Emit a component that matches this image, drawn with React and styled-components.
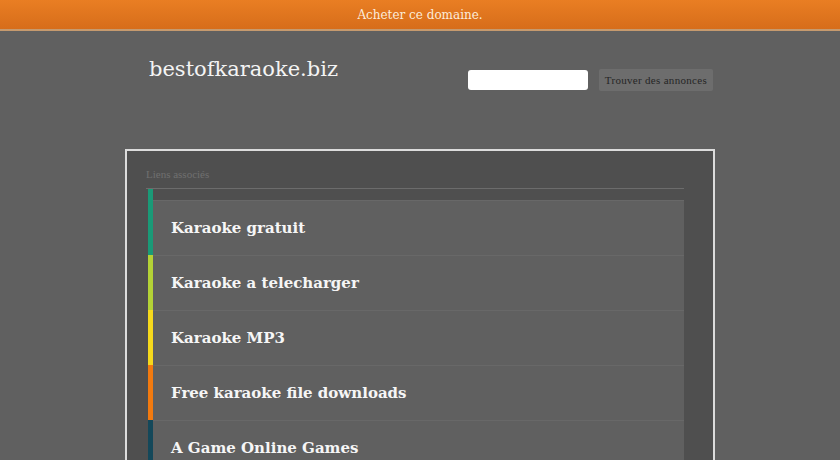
import React from 'react'
import styled, { createGlobalStyle } from 'styled-components'

const Global = createGlobalStyle`
  html, body {
    margin: 0;
    padding: 0;
    background: #606060;
    font-family: "Liberation Serif", "Times New Roman", serif;
    overflow: hidden;
  }
`

const TopBar = styled.div`
  height: 29px;
  background: linear-gradient(#e97e23, #d76d1a);
  border-bottom: 2px solid #c69a6e;
  display: flex;
  align-items: center;
  justify-content: center;
  color: #fcecdb;
  font-family: "DejaVu Serif", serif;
  font-size: 12px;
`

const Wrap = styled.div`
  width: 590px;
  margin: 0 auto;
`

const Header = styled.header`
  display: flex;
  justify-content: space-between;
  align-items: flex-start;
  height: 118px;
  padding: 0 2px 0 24px;
`

const Title = styled.h1`
  margin: 26px 0 0;
  font-family: "DejaVu Serif", serif;
  font-size: 21px;
  font-weight: normal;
  color: #f4f4f4;
`

const Search = styled.form`
  display: flex;
  align-items: center;
  gap: 11px;
  margin-top: 38px;
`

const Input = styled.input`
  width: 120px;
  height: 20px;
  box-sizing: border-box;
  border: none;
  border-radius: 3px;
  background: #fff;
`

const Button = styled.button`
  height: 22px;
  padding: 0 6px;
  border: none;
  border-radius: 2px;
  background: #6d6d6d;
  color: #262626;
  font-family: "Liberation Serif", serif;
  font-size: 11px;
  font-weight: normal;
  letter-spacing: 0.3px;
`

const Panel = styled.section`
  border: 2px solid #dcdcdc;
  background: #4f4f4f;
  padding: 17px 29px 0 19px;
  height: 340px;
`

const Label = styled.div`
  font-size: 11px;
  color: #6f6f6f;
  padding-bottom: 8px;
  border-bottom: 1px solid #6c6c6c;
`

const List = styled.ul`
  list-style: none;
  margin: 0 0 0 2px;
  padding: 0;
`

const Item = styled.li`
  border-left: 5px solid ${p => p.$color};
  padding-top: ${p => (p.$first ? '11px' : '0')};
`

const Link = styled.a`
  display: flex;
  align-items: center;
  height: 55px;
  box-sizing: border-box;
  padding-left: 18px;
  background: #606060;
  border-top: 1px solid #686868;
  color: #f6f6f6;
  font-family: "DejaVu Serif", serif;
  font-size: 15px;
  font-weight: bold;
  text-decoration: none;
`

const links = [
  ['Karaoke gratuit', '#1a9a77'],
  ['Karaoke a telecharger', '#b4d236'],
  ['Karaoke MP3', '#f6d91c'],
  ['Free karaoke file downloads', '#f27a0f'],
  ['A Game Online Games', '#14485a'],
]

export default function App() {
  return (
    <>
      <Global />
      <TopBar>Acheter ce domaine.</TopBar>
      <Wrap>
        <Header>
          <Title>bestofkaraoke.biz</Title>
          <Search onSubmit={e => e.preventDefault()}>
            <Input type="text" />
            <Button type="submit">Trouver des annonces</Button>
          </Search>
        </Header>
        <Panel>
          <Label>Liens associés</Label>
          <List>
            {links.map(([text, color], i) => (
              <Item key={text} $color={color} $first={i === 0}>
                <Link href="#">{text}</Link>
              </Item>
            ))}
          </List>
        </Panel>
      </Wrap>
    </>
  )
}
